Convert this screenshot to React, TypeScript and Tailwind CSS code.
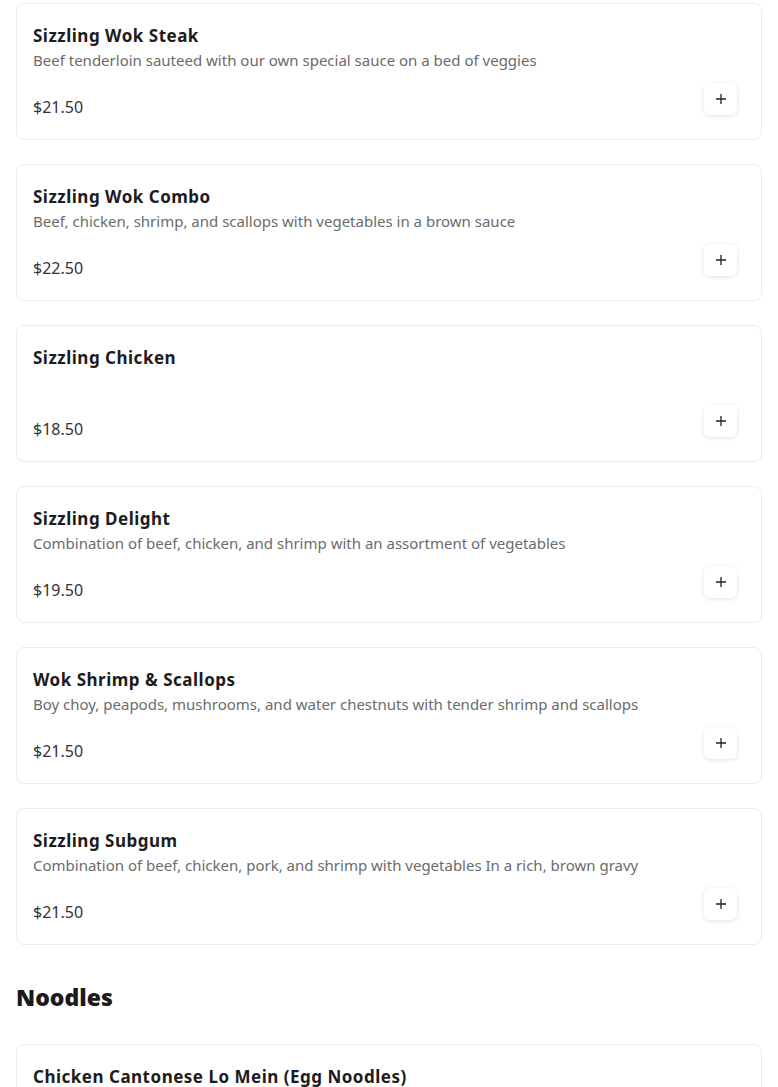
import React from "react";

const items = [
  { name: "Sizzling Wok Steak", desc: "Beef tenderloin sauteed with our own special sauce on a bed of veggies", price: "$21.50" },
  { name: "Sizzling Wok Combo", desc: "Beef, chicken, shrimp, and scallops with vegetables in a brown sauce", price: "$22.50" },
  { name: "Sizzling Chicken", desc: "", price: "$18.50" },
  { name: "Sizzling Delight", desc: "Combination of beef, chicken, and shrimp with an assortment of vegetables", price: "$19.50" },
  { name: "Wok Shrimp & Scallops", desc: "Boy choy, peapods, mushrooms, and water chestnuts with tender shrimp and scallops", price: "$21.50" },
  { name: "Sizzling Subgum", desc: "Combination of beef, chicken, pork, and shrimp with vegetables In a rich, brown gravy", price: "$21.50" },
];

function Card({ name, desc, price }: { name: string; desc: string; price: string }) {
  return (
    <div className="rounded-lg border border-[#ececec] bg-white px-4 pt-4 pb-5">
      <div className="pt-[1px] text-[17px] leading-[30px] font-bold text-[#1c1c1c] tracking-[0.5px]">{name}</div>
      <div className="-mt-[1px] text-[15px] leading-[20px] text-[#6b6b6b] min-h-[20px]">{desc}</div>
      <div className="mt-[13px] flex items-start justify-between">
        <div className="mt-[12px] text-[16px] leading-[24px] text-[#333]">{price}</div>
        <button className="mr-2 flex h-[32px] w-[33px] items-center justify-center rounded-md bg-white shadow-[0_1px_4px_rgba(0,0,0,0.12)]">
          <svg width="12" height="12" viewBox="0 0 12 12">
            <path d="M6 1v10M1 6h10" stroke="#222" strokeWidth="1.3" />
          </svg>
        </button>
      </div>
    </div>
  );
}

export default function App() {
  return (
    <div className="bg-white px-4 pt-[3px]" style={{ fontFamily: '"Noto Sans", sans-serif' }}>
      <div className="flex flex-col gap-[24px]">
        {items.map((it, i) => (
          <Card key={i} {...it} />
        ))}
      </div>
      <h2 className="mt-[36px] mb-[31px] text-[23px] leading-[32px] font-black text-[#1a1a1a]">Noodles</h2>
      <div className="rounded-lg border border-[#ececec] bg-white px-4 pt-4 pb-5">
        <div className="pt-[1px] text-[17px] leading-[30px] font-bold text-[#1c1c1c] tracking-[0.5px]">Chicken Cantonese Lo Mein (Egg Noodles)</div>
        <div className="h-[200px]" />
      </div>
    </div>
  );
}
